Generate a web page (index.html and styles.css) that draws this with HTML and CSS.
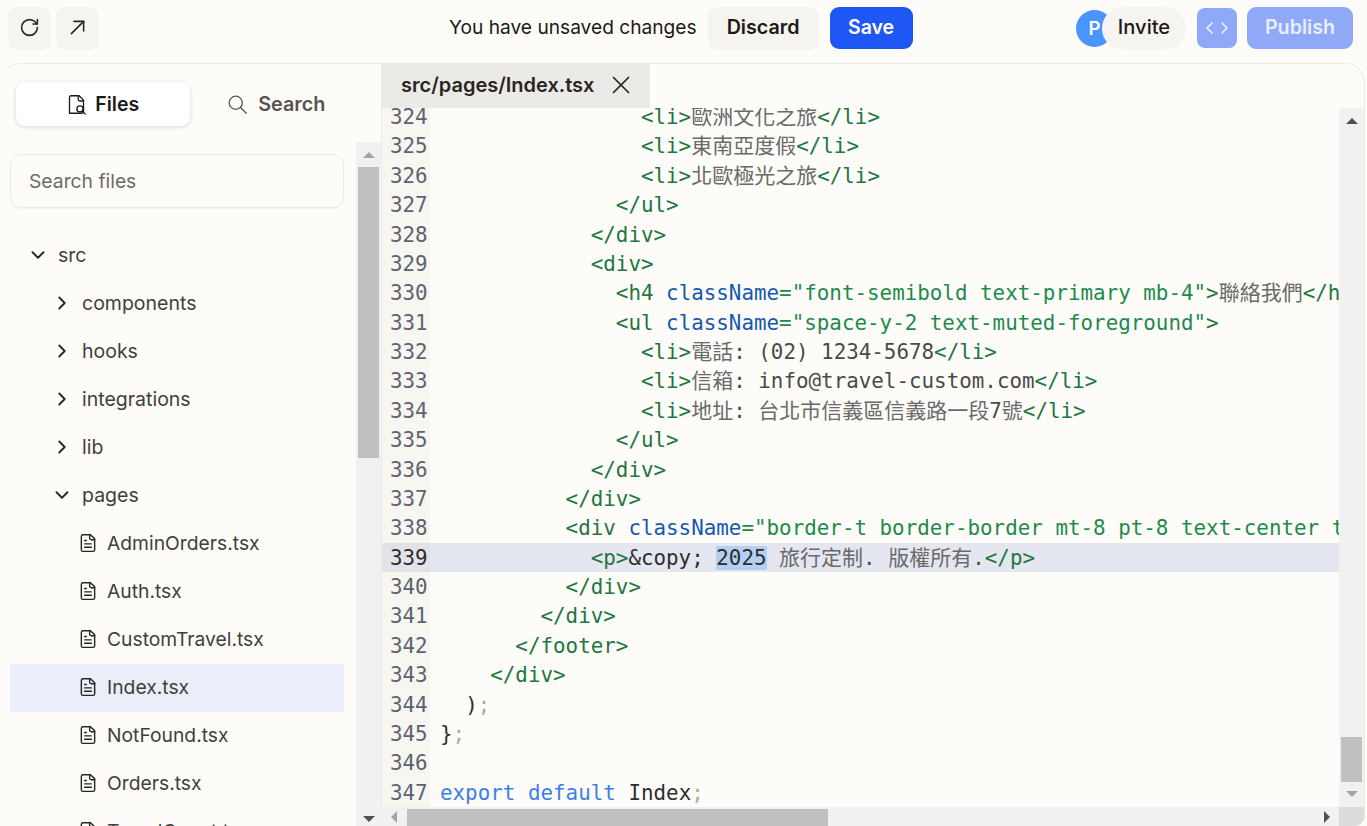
FILE: index.html
```html
<!DOCTYPE html>
<html lang="en">
<head>
    <meta charset="UTF-8">
    <meta name="viewport" content="width=device-width, initial-scale=1.0">
    <title>Code editor</title>
    <link rel="stylesheet" href="styles.css">
</head>
<body>
    <header class="topbar">
        <div class="nav-btns">
            <button class="btn-square">
                <svg class="icon" viewBox="0 0 24 24"><path d="M21 12a9 9 0 1 1-9-9c2.52 0 4.93 1 6.74 2.74L21 8"/><path d="M21 3v5h-5"/></svg>
            </button>
            <button class="btn-square">
                <svg class="icon" viewBox="0 0 24 24"><path d="M8 5h11v11"/><path d="M5 19 19 5"/></svg>
            </button>
        </div>
        <div class="unsaved">
            <span class="unsaved-text">You have unsaved changes</span>
            <button class="btn-discard">Discard</button>
            <button class="btn-save">Save</button>
        </div>
        <div class="actions">
            <div class="collab">
                <span class="avatar">P</span>
                <button class="btn-invite">Invite</button>
            </div>
            <button class="btn-code">
                <svg class="icon-code" viewBox="0 0 24 24"><path d="m7 7-5 5 5 5"/><path d="m17 7 5 5-5 5"/></svg>
            </button>
            <button class="btn-publish">Publish</button>
        </div>
    </header>

    <main class="panel">
        <aside class="sidebar">
            <div class="tabs">
                <button class="tab tab-active">
                    <svg class="icon-tab" viewBox="0 0 24 24"><path d="M14 2v4a2 2 0 0 0 2 2h4"/><path d="M4.3 22H18a2 2 0 0 0 2-2V7l-5-5H6a2 2 0 0 0-2 2v18"/><circle cx="16" cy="17" r="3.5"/><path d="m22 23-3.5-3.5"/></svg>
                    Files
                </button>
                <button class="tab tab-search">
                    <svg class="icon-tab" viewBox="0 0 24 24"><circle cx="10" cy="10" r="7.5"/><path d="m22 22-6.8-6.8"/></svg>
                    Search
                </button>
            </div>
            <div class="sidebar-body">
                <div class="tree-wrap">
                    <div class="search-box">Search files</div>
                    <ul class="tree">
                        <li class="row lvl-0"><svg class="chev" viewBox="0 0 24 24"><path d="m6 9 6 6 6-6"/></svg>src</li>
                        <li class="row lvl-1"><svg class="chev" viewBox="0 0 24 24"><path d="m9 18 6-6-6-6"/></svg>components</li>
                        <li class="row lvl-1"><svg class="chev" viewBox="0 0 24 24"><path d="m9 18 6-6-6-6"/></svg>hooks</li>
                        <li class="row lvl-1"><svg class="chev" viewBox="0 0 24 24"><path d="m9 18 6-6-6-6"/></svg>integrations</li>
                        <li class="row lvl-1"><svg class="chev" viewBox="0 0 24 24"><path d="m9 18 6-6-6-6"/></svg>lib</li>
                        <li class="row lvl-1"><svg class="chev" viewBox="0 0 24 24"><path d="m6 9 6 6 6-6"/></svg>pages</li>
                        <li class="row lvl-2"><svg class="file" viewBox="0 0 24 24"><path d="M15 2H6a2 2 0 0 0-2 2v16a2 2 0 0 0 2 2h12a2 2 0 0 0 2-2V7Z"/><path d="M14 2v4a2 2 0 0 0 2 2h4"/><path d="M16 13H8"/><path d="M16 17H8"/><path d="M10 9H8"/></svg>AdminOrders.tsx</li>
                        <li class="row lvl-2"><svg class="file" viewBox="0 0 24 24"><path d="M15 2H6a2 2 0 0 0-2 2v16a2 2 0 0 0 2 2h12a2 2 0 0 0 2-2V7Z"/><path d="M14 2v4a2 2 0 0 0 2 2h4"/><path d="M16 13H8"/><path d="M16 17H8"/><path d="M10 9H8"/></svg>Auth.tsx</li>
                        <li class="row lvl-2"><svg class="file" viewBox="0 0 24 24"><path d="M15 2H6a2 2 0 0 0-2 2v16a2 2 0 0 0 2 2h12a2 2 0 0 0 2-2V7Z"/><path d="M14 2v4a2 2 0 0 0 2 2h4"/><path d="M16 13H8"/><path d="M16 17H8"/><path d="M10 9H8"/></svg>CustomTravel.tsx</li>
                        <li class="row lvl-2 selected"><svg class="file" viewBox="0 0 24 24"><path d="M15 2H6a2 2 0 0 0-2 2v16a2 2 0 0 0 2 2h12a2 2 0 0 0 2-2V7Z"/><path d="M14 2v4a2 2 0 0 0 2 2h4"/><path d="M16 13H8"/><path d="M16 17H8"/><path d="M10 9H8"/></svg>Index.tsx</li>
                        <li class="row lvl-2"><svg class="file" viewBox="0 0 24 24"><path d="M15 2H6a2 2 0 0 0-2 2v16a2 2 0 0 0 2 2h12a2 2 0 0 0 2-2V7Z"/><path d="M14 2v4a2 2 0 0 0 2 2h4"/><path d="M16 13H8"/><path d="M16 17H8"/><path d="M10 9H8"/></svg>NotFound.tsx</li>
                        <li class="row lvl-2"><svg class="file" viewBox="0 0 24 24"><path d="M15 2H6a2 2 0 0 0-2 2v16a2 2 0 0 0 2 2h12a2 2 0 0 0 2-2V7Z"/><path d="M14 2v4a2 2 0 0 0 2 2h4"/><path d="M16 13H8"/><path d="M16 17H8"/><path d="M10 9H8"/></svg>Orders.tsx</li>
                        <li class="row lvl-2"><svg class="file" viewBox="0 0 24 24"><path d="M15 2H6a2 2 0 0 0-2 2v16a2 2 0 0 0 2 2h12a2 2 0 0 0 2-2V7Z"/><path d="M14 2v4a2 2 0 0 0 2 2h4"/><path d="M16 13H8"/><path d="M16 17H8"/><path d="M10 9H8"/></svg>TravelCount.tsx</li>
                    </ul>
                </div>
                <div class="vscroll side-scroll">
                    <span class="arrow arrow-up arrow-faded"></span>
                    <div class="vtrack"><div class="vthumb"></div></div>
                    <span class="arrow arrow-down"></span>
                </div>
            </div>
        </aside>

        <section class="editor">
            <div class="editor-tabs">
                <div class="file-tab">
                    src/pages/Index.tsx
                    <svg class="icon-close" viewBox="0 0 24 24"><path d="M18 6 6 18"/><path d="m6 6 12 12"/></svg>
                </div>
            </div>
            <div class="editor-main">
                <div class="code-area">
                    <div class="code">
                        <div class="line"><span class="num">324</span><span class="src">                <span class="t">&lt;li&gt;</span><span class="c">歐洲文化之旅</span><span class="t">&lt;/li&gt;</span></span></div>
                        <div class="line"><span class="num">325</span><span class="src">                <span class="t">&lt;li&gt;</span><span class="c">東南亞度假</span><span class="t">&lt;/li&gt;</span></span></div>
                        <div class="line"><span class="num">326</span><span class="src">                <span class="t">&lt;li&gt;</span><span class="c">北歐極光之旅</span><span class="t">&lt;/li&gt;</span></span></div>
                        <div class="line"><span class="num">327</span><span class="src">              <span class="t">&lt;/ul&gt;</span></span></div>
                        <div class="line"><span class="num">328</span><span class="src">            <span class="t">&lt;/div&gt;</span></span></div>
                        <div class="line"><span class="num">329</span><span class="src">            <span class="t">&lt;div&gt;</span></span></div>
                        <div class="line"><span class="num">330</span><span class="src">              <span class="t">&lt;h4</span> <span class="a">className</span><span class="s">="font-semibold text-primary mb-4"</span><span class="t">&gt;</span><span class="c">聯絡我們</span><span class="t">&lt;/h4&gt;</span></span></div>
                        <div class="line"><span class="num">331</span><span class="src">              <span class="t">&lt;ul</span> <span class="a">className</span><span class="s">="space-y-2 text-muted-foreground"</span><span class="t">&gt;</span></span></div>
                        <div class="line"><span class="num">332</span><span class="src">                <span class="t">&lt;li&gt;</span><span class="c">電話</span>: (02) 1234-5678<span class="t">&lt;/li&gt;</span></span></div>
                        <div class="line"><span class="num">333</span><span class="src">                <span class="t">&lt;li&gt;</span><span class="c">信箱</span>: info@travel-custom.com<span class="t">&lt;/li&gt;</span></span></div>
                        <div class="line"><span class="num">334</span><span class="src">                <span class="t">&lt;li&gt;</span><span class="c">地址</span>: <span class="c">台北市信義區信義路一段</span>7<span class="c">號</span><span class="t">&lt;/li&gt;</span></span></div>
                        <div class="line"><span class="num">335</span><span class="src">              <span class="t">&lt;/ul&gt;</span></span></div>
                        <div class="line"><span class="num">336</span><span class="src">            <span class="t">&lt;/div&gt;</span></span></div>
                        <div class="line"><span class="num">337</span><span class="src">          <span class="t">&lt;/div&gt;</span></span></div>
                        <div class="line"><span class="num">338</span><span class="src">          <span class="t">&lt;div</span> <span class="a">className</span><span class="s">="border-t border-border mt-8 pt-8 text-center text-muted-foreground"</span><span class="t">&gt;</span></span></div>
                        <div class="line line-active"><span class="num">339</span><span class="src">            <span class="t">&lt;p&gt;</span><span class="dark">&amp;copy; </span><span class="pick">2025</span> <span class="c">旅行定制</span>. <span class="c">版權所有</span>.<span class="t">&lt;/p&gt;</span></span></div>
                        <div class="line"><span class="num">340</span><span class="src">          <span class="t">&lt;/div&gt;</span></span></div>
                        <div class="line"><span class="num">341</span><span class="src">        <span class="t">&lt;/div&gt;</span></span></div>
                        <div class="line"><span class="num">342</span><span class="src">      <span class="t">&lt;/footer&gt;</span></span></div>
                        <div class="line"><span class="num">343</span><span class="src">    <span class="t">&lt;/div&gt;</span></span></div>
                        <div class="line"><span class="num">344</span><span class="src">  <span class="dark">)</span><span class="p">;</span></span></div>
                        <div class="line"><span class="num">345</span><span class="src"><span class="dark">}</span><span class="p">;</span></span></div>
                        <div class="line"><span class="num">346</span><span class="src"></span></div>
                        <div class="line"><span class="num">347</span><span class="src"><span class="k">export</span> <span class="k">default</span> <span class="dark">Index</span><span class="p">;</span></span></div>
                    </div>
                </div>
                <div class="vscroll code-scroll">
                    <span class="arrow arrow-up"></span>
                    <div class="vtrack"><div class="vthumb"></div></div>
                    <span class="arrow arrow-down arrow-faded"></span>
                </div>
                <div class="hscroll">
                    <span class="arrow arrow-left arrow-faded"></span>
                    <div class="htrack"><div class="hthumb"></div></div>
                    <span class="arrow arrow-right"></span>
                </div>
                <div class="corner"></div>
            </div>
        </section>
    </main>
</body>
</html>
```

FILE: styles.css
```css
html, body {
    height: 100%;
}

body {
    margin: 0;
    overflow: hidden;
    display: flex;
    flex-direction: column;
    background-color: #fdfcf9;
    color: #1c1917;
    font-family: Inter, "Noto Sans", sans-serif;
    font-size: 19.5px;
}

button {
    font-family: inherit;
    font-size: inherit;
    border: none;
    padding: 0;
    cursor: pointer;
}

svg {
    fill: none;
    stroke: currentColor;
    stroke-width: 2;
    stroke-linecap: round;
    stroke-linejoin: round;
    flex-shrink: 0;
}

/* top bar */
.topbar {
    height: 63px;
    flex-shrink: 0;
    display: flex;
    align-items: center;
    padding: 0 14px 7px 8px;
    box-sizing: border-box;
}

.topbar button {
    padding-bottom: 2px;
}

.nav-btns {
    display: flex;
    gap: 5px;
}

.btn-square {
    width: 43px;
    height: 43px;
    display: flex;
    align-items: center;
    justify-content: center;
    background-color: #f6f4ef;
    border-radius: 9px;
    color: #292524;
}

.icon {
    width: 21px;
    height: 21px;
    stroke-width: 1.8;
}

.unsaved {
    display: flex;
    align-items: center;
    margin-left: 350px;
}

.unsaved-text {
    margin-right: 11px;
    margin-top: -2px;
    font-size: 19.15px;
}

.btn-discard {
    width: 111px;
    height: 43px;
    border-radius: 9px;
    background-color: #f6f4ef;
    color: #1c1917;
    font-weight: 600;
    font-size: 19.7px;
}

.btn-save {
    width: 83px;
    height: 42px;
    margin-left: 11px;
    border-radius: 9px;
    background-color: #1f57f5;
    color: #fff;
    font-weight: 600;
}

.actions {
    margin-left: auto;
    display: flex;
    align-items: center;
}

.collab {
    display: flex;
    align-items: center;
}

.avatar {
    width: 37px;
    height: 37px;
    border-radius: 50%;
    background-color: #4a94ff;
    color: #fff;
    font-size: 18.6px;
    font-weight: 600;
    display: flex;
    align-items: center;
    justify-content: center;
}

.btn-invite {
    width: 84px;
    height: 43px;
    margin-left: -11px;
    border-radius: 22px;
    background-color: #f6f4ef;
    color: #1c1917;
    font-weight: 500;
    font-size: 20.1px;
    position: relative;
}

.btn-code {
    width: 40px;
    height: 40px;
    margin-left: 11px;
    border-radius: 8px;
    background-color: #8fa9f8;
    color: #eef2fe;
    display: flex;
    align-items: center;
    justify-content: center;
}

.topbar .btn-code {
    padding-bottom: 0;
}

.icon-code {
    width: 24px;
    height: 24px;
    stroke-width: 1.6;
}

.btn-publish {
    width: 106px;
    height: 42px;
    margin-left: 10px;
    border-radius: 9px;
    background-color: #8fa9f8;
    color: #e9eefe;
    font-weight: 600;
    font-size: 19.7px;
}

/* main panel */
.panel {
    flex: 1;
    min-height: 0;
    margin-right: 2px;
    display: grid;
    grid-template-columns: 382px 1fr;
    border: 1px solid #ecebe6;
    border-left: none;
    border-bottom: none;
    border-radius: 20px 20px 10px 10px;
    overflow: hidden;
}

.sidebar {
    display: flex;
    flex-direction: column;
    min-height: 0;
    border-right: 1px solid #ecebe6;
}

.tabs {
    height: 78px;
    flex-shrink: 0;
    padding: 18px 18px 0 16px;
    box-sizing: border-box;
    display: flex;
}

.tab {
    flex: 1;
    height: 44px;
    display: flex;
    align-items: center;
    justify-content: center;
    gap: 8px;
    border-radius: 9px;
    background: transparent;
    color: #57534e;
    font-weight: 600;
}

.tab-active {
    background-color: #fff;
    color: #1c1917;
    box-shadow: 0 1px 4px rgba(0, 0, 0, 0.16);
}

.tab-search {
    gap: 10px;
    font-size: 19.8px;
}

.icon-tab {
    width: 21px;
    height: 21px;
    stroke-width: 1.5;
}

.sidebar-body {
    flex: 1;
    min-height: 0;
    display: flex;
}

.tree-wrap {
    flex: 1;
    min-width: 0;
    overflow: hidden;
    padding: 12px 12px 0 10px;
}

.search-box {
    height: 54px;
    box-sizing: border-box;
    border: 1px solid #ecebe6;
    border-radius: 11px;
    padding-left: 18px;
    display: flex;
    align-items: center;
    color: #6b6b66;
    font-size: 19.3px;
    box-shadow: 0 1px 2px rgba(0, 0, 0, 0.05);
}

.tree {
    list-style: none;
    margin: 24px 0 0;
    padding: 0;
}

.row {
    height: 48px;
    box-sizing: border-box;
    padding-bottom: 2px;
    display: flex;
    align-items: center;
    color: #3f3f3c;
}

.lvl-0 { padding-left: 17px; }
.lvl-1 { padding-left: 41px; }

.lvl-2 {
    padding-left: 68px;
    font-size: 19.3px;
}

.chev {
    width: 22px;
    height: 22px;
    margin-right: 9px;
    stroke-width: 2;
    color: #292524;
}

.file {
    width: 20px;
    height: 22px;
    margin-right: 9px;
    stroke-width: 1.7;
    color: #292524;
}

.selected {
    background-color: #e9eef8;
}

/* editor */
.editor {
    display: flex;
    flex-direction: column;
    min-width: 0;
    min-height: 0;
}

.editor-tabs {
    height: 44px;
    flex-shrink: 0;
    display: flex;
}

.file-tab {
    width: 268px;
    box-sizing: border-box;
    padding-left: 19px;
    padding-bottom: 2px;
    display: flex;
    align-items: center;
    gap: 12px;
    background-color: #eceae6;
    color: #292524;
    font-weight: 600;
    font-size: 20px;
}

.icon-close {
    width: 30px;
    height: 30px;
    stroke-width: 1.4;
}

.editor-main {
    flex: 1;
    min-height: 0;
    display: grid;
    grid-template-columns: 1fr 25px;
    grid-template-rows: 1fr 19px;
}

.code-area {
    overflow: hidden;
    min-width: 0;
    min-height: 0;
}

.code {
    margin-top: -6px;
    font-family: "DejaVu Sans Mono", "Noto Sans CJK TC", monospace;
    font-size: 20.86px;
    color: #4a4a48;
}

.line {
    height: 29.39px;
    display: flex;
    white-space: pre;
}

.num,
.src {
    box-sizing: border-box;
    padding-top: 2px;
    line-height: 27.39px;
}

.num {
    width: 48px;
    flex-shrink: 0;
    padding-left: 8px;
    background-color: #f8f6f0;
    color: #5c6370;
}

.src {
    padding-left: 10px;
}

.line-active {
    background-color: #e4e6f0;
}

.line-active .num {
    background-color: #e2e3e8;
    color: #2c2c2c;
}

.t { color: #22763f; }
.a { color: #1558b0; }
.s { color: #1f8a4c; }
.k { color: #3b80e6; }
.p { color: #a9b09a; }
.dark { color: #2e2e2e; }

.c {
    font-family: "Noto Sans CJK TC", sans-serif;
    font-size: 21px;
    line-height: 0;
    color: #6a6a68;
}

.pick {
    background-color: #b3cff2;
    color: #2e2e2e;
}

/* scrollbars */
.vscroll {
    background-color: #f1f1f1;
    display: flex;
    flex-direction: column;
    align-items: center;
}

.vtrack {
    flex: 1;
    width: 100%;
    padding: 0 2px;
    box-sizing: border-box;
}

.vthumb {
    background-color: #c0c0c0;
}

.side-scroll {
    width: 25px;
    padding-top: 10px;
    padding-bottom: 4px;
    box-sizing: border-box;
}

.side-scroll .vtrack {
    margin-top: 9px;
    margin-bottom: 5px;
}

.side-scroll .vthumb {
    height: 291px;
}

.code-scroll {
    padding-top: 10px;
    padding-bottom: 10px;
    box-sizing: border-box;
}

.code-scroll .vtrack {
    padding-top: 613px;
}

.code-scroll .vthumb {
    height: 45px;
}

.hscroll {
    background-color: #f1f1f1;
    display: flex;
    align-items: center;
    padding: 0 9px;
}

.htrack {
    flex: 1;
    height: 100%;
    padding: 2px 0 0 10px;
    box-sizing: border-box;
}

.hthumb {
    width: 421px;
    height: 100%;
    background-color: #c0c0c0;
}

.corner {
    background-color: #dcdcdc;
}

.arrow {
    width: 0;
    height: 0;
    flex-shrink: 0;
    border-style: solid;
    border-color: transparent;
}

.arrow-up {
    border-width: 0 6px 6px;
    border-bottom-color: #505050;
}

.arrow-down {
    border-width: 6px 6px 0;
    border-top-color: #505050;
}

.arrow-left {
    border-width: 6px 6px 6px 0;
    border-right-color: #505050;
}

.arrow-right {
    border-width: 6px 0 6px 6px;
    border-left-color: #505050;
}

.arrow-up.arrow-faded { border-bottom-color: #a3a3a3; }
.arrow-down.arrow-faded { border-top-color: #a3a3a3; }
.arrow-left.arrow-faded { border-right-color: #a3a3a3; }
```
